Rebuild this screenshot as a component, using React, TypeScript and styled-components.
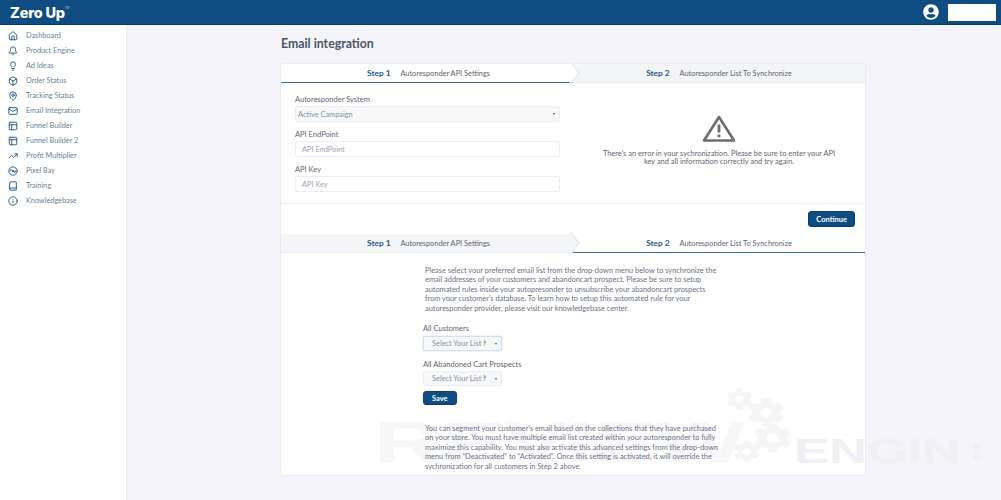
import styled, { createGlobalStyle } from 'styled-components';
import {
  Bell,
  Book,
  Box,
  Disc3,
  House,
  Info,
  Lightbulb,
  Mail,
  MapPin,
  PanelsTopLeft,
  TrendingUp,
} from 'lucide-react';
import { FaCog, FaUserCircle } from 'react-icons/fa';

const GlobalStyle = createGlobalStyle`
  html, body {
    margin: 0;
    height: 100%;
    overflow: hidden;
    background: #f4f4fa;
    font-family: "Lato", "Liberation Sans", sans-serif;
  }
  * {
    box-sizing: border-box;
  }
`;

const Page = styled.div`
  height: 500px;
  display: flex;
  flex-direction: column;
`;

const TopBar = styled.header`
  height: 25px;
  flex-shrink: 0;
  background: #0f4c81;
  border-bottom: 1px solid #0b3d6b;
  display: flex;
  align-items: center;
  justify-content: space-between;
  padding: 0 5px 0 10px;
`;

const Logo = styled.div`
  color: #fff;
  font-family: "Inter", "Liberation Sans", sans-serif;
  font-weight: 800;
  font-size: 14.5px;
  letter-spacing: -0.2px;
  display: flex;
  align-items: flex-start;

  sup {
    font-size: 3px;
    font-weight: 400;
    line-height: 8px;
    color: #b9c9d9;
  }
`;

const UserArea = styled.div`
  display: flex;
  align-items: center;
  gap: 9px;
`;

const UserName = styled.div`
  width: 48px;
  height: 17px;
  background: #fff;
`;

const Body = styled.div`
  flex: 1;
  display: flex;
  min-height: 0;
`;

const Sidebar = styled.nav`
  width: 127px;
  flex-shrink: 0;
  background: #fff;
  border-right: 1px solid #eceaf2;
  padding-top: 3px;
`;

const NavItem = styled.div`
  height: 15px;
  display: flex;
  align-items: center;
  gap: 8px;
  padding-left: 8px;
  font-size: 7.3px;
  color: #6c7f94;

  svg {
    width: 10px;
    height: 10px;
    color: #1d5587;
    stroke-width: 2.2;
    flex-shrink: 0;
  }
`;

const Main = styled.main`
  flex: 1;
  padding: 0 136px 0 154px;
`;

const Title = styled.h1`
  margin: 0;
  height: 39px;
  padding-top: 12px;
  font-size: 12.3px;
  line-height: 14px;
  font-weight: 700;
  color: #4b5563;
`;

const Card = styled.section`
  position: relative;
  background: #fff;
  border-radius: 2px;
  box-shadow: 0 0 2px rgba(60, 60, 90, 0.18);
  height: 411px;
`;

const Tabs = styled.div`
  display: grid;
  grid-template-columns: 292px 1fr;
  height: 19px;
`;

const Tab = styled.div<{ $active: boolean; $second?: boolean }>`
  position: relative;
  display: flex;
  align-items: center;
  justify-content: center;
  gap: 10px;
  background: ${(p) => (p.$active ? '#fff' : '#f4f5f7')};
  border-bottom: ${(p) => (p.$active ? '1.5px solid #2f6da3' : '1px solid #e9ebef')};
  padding-left: ${(p) => (p.$second ? '0' : '3px')};

  ${(p) => !p.$second && `
    &::after {
      content: '';
      position: absolute;
      z-index: 1;
      right: -5px;
      top: 2px;
      width: 13px;
      height: 13px;
      background: ${p.$active ? '#fff' : '#f4f5f7'};
      border-top: 1px solid #dfe2e8;
      border-right: 1px solid #dfe2e8;
      transform: rotate(45deg) skew(8deg, 8deg);
    }
  `}
`;

const StepNo = styled.span`
  color: #1f5687;
  font-size: 8.3px;
  font-weight: 700;
`;

const StepName = styled.span`
  color: #5d6470;
  font-size: 7.4px;
`;

const StepOne = styled.div`
  height: 121px;
  display: grid;
  grid-template-columns: 292px 1fr;
  border-bottom: 1px solid #eceef2;
`;

const FormColumn = styled.div`
  padding: 12px 13px 0 14px;
  display: flex;
  flex-direction: column;
`;

const Label = styled.label`
  font-size: 7.5px;
  line-height: 9px;
  color: #5d6470;
  margin-bottom: 2px;
`;

const SelectBox = styled.div<{ $focus?: boolean }>`
  position: relative;
  height: 16px;
  display: flex;
  align-items: center;
  background: #f8f8f9;
  border: 1px solid ${(p) => (p.$focus ? '#cfdff0' : '#ecedf0')};
  box-shadow: ${(p) => (p.$focus ? '0 0 2px #bcd6ee' : 'none')};
  border-radius: 2px;
  font-size: 7.4px;
  color: #7d93ad;
  padding-left: 2px;
  white-space: nowrap;

  &::after {
    content: '';
    position: absolute;
    right: 4px;
    top: 6px;
    border: 1.8px solid transparent;
    border-top: 2.5px solid #2a5680;
    border-bottom: 0;
  }
`;

const TextBox = styled.div`
  height: 16px;
  display: flex;
  align-items: center;
  background: #fff;
  border: 1px solid #eceef1;
  border-radius: 2px;
  font-size: 7.4px;
  color: #9aa3ae;
  padding-left: 6px;
`;

const FieldGroup = styled.div`
  margin-top: 8px;
  display: flex;
  flex-direction: column;
`;

const ErrorColumn = styled.div`
  display: flex;
  flex-direction: column;
  align-items: center;
  padding-top: 32px;
`;

const ErrorText = styled.p`
  margin: 8px 0 0;
  text-align: center;
  font-size: 7.45px;
  line-height: 7.5px;
  color: #5f6672;
`;

const Footer = styled.div`
  height: 30px;
  display: flex;
  align-items: flex-start;
  justify-content: flex-end;
  padding: 7px 10px 0 0;
`;

const Button = styled.button`
  height: 16px;
  padding: 0 7px;
  background: #0f4c81;
  color: #fff;
  border: 1px solid #0b3d6b;
  border-radius: 3px;
  font-family: inherit;
  font-size: 7.5px;
  font-weight: 700;
`;

const StepTwo = styled.div`
  width: 304px;
  margin-left: 142px;
  padding-top: 13px;
  position: relative;
  z-index: 1;
`;

const Copy = styled.p`
  margin: 0 0 0 2px;
  font-size: 7.4px;
  line-height: 9.4px;
  color: #6b7280;
  white-space: nowrap;
`;

const IntroCopy = styled(Copy)`
  margin-bottom: 11px;
`;

const ListField = styled.div`
  width: 79px;
  display: flex;
  flex-direction: column;
  margin-top: 9px;
`;

const ListFieldLabel = styled(Label)<{ $tight?: boolean }>`
  white-space: nowrap;
  margin-bottom: ${(p) => (p.$tight ? '2px' : '3px')};
`;

const ListSelect = styled(SelectBox)`
  padding-left: 8px;
  height: 15px;
`;

const ListSelectText = styled.span`
  width: 54px;
  overflow: hidden;
`;

const SaveButton = styled(Button)`
  display: block;
  height: 14px;
  padding: 0 8px;
  margin-top: 5px;
`;

const SecondCopy = styled(Copy)`
  margin-top: 19px;
`;

const Watermark = styled.div`
  position: absolute;
  left: 93px;
  top: 356px;
  width: 610px;
  height: 43px;
  color: #f7f6f8;
  font-family: "Liberation Sans", sans-serif;
  font-weight: 700;
  display: flex;
  align-items: flex-end;
  pointer-events: none;
`;

const BrandBig = styled.span`
  width: 230px;
  margin-right: 190px;
  font-size: 58px;
  line-height: 42px;
  transform: scaleX(1.62);
  transform-origin: left bottom;
`;

const BrandEnd = styled.span`
  width: 112px;
  margin-right: 66px;
  font-size: 35px;
  line-height: 25px;
  color: #f1eff3;
  transform: scaleX(1.5);
  transform-origin: left bottom;
`;

const BrandTld = styled.span`
  font-size: 9px;
  font-weight: 400;
  line-height: 8px;
  color: #eceaf0;
  writing-mode: vertical-rl;
  transform: rotate(180deg);
`;

const Gear = styled(FaCog)<{ $x: number; $y: number; $w: number; $h: number }>`
  position: absolute;
  left: ${(p) => p.$x}px;
  top: ${(p) => p.$y}px;
  width: ${(p) => p.$w}px;
  height: ${(p) => p.$h}px;
  color: #f5f4f6;
`;

const navItems = [
  { label: 'Dashboard', icon: House },
  { label: 'Product Engine', icon: Bell },
  { label: 'Ad Ideas', icon: Lightbulb },
  { label: 'Order Status', icon: Box },
  { label: 'Tracking Status', icon: MapPin },
  { label: 'Email Integration', icon: Mail },
  { label: 'Funnel Builder', icon: PanelsTopLeft },
  { label: 'Funnel Builder 2', icon: PanelsTopLeft },
  { label: 'Profit Multiplier', icon: TrendingUp },
  { label: 'Pixel Bay', icon: Disc3 },
  { label: 'Training', icon: Book },
  { label: 'Knowledgebase', icon: Info },
];

function StepTabs({ active }: { active: 1 | 2 }) {
  return (
    <Tabs>
      <Tab $active={active === 1}>
        <StepNo>Step 1</StepNo>
        <StepName>Autoresponder API Settings</StepName>
      </Tab>
      <Tab $active={active === 2} $second>
        <StepNo>Step 2</StepNo>
        <StepName>Autoresponder List To Synchronize</StepName>
      </Tab>
    </Tabs>
  );
}

function WarningIcon() {
  return (
    <svg width="34" height="27" viewBox="0 0 34 27">
      <path d="M17 2 L32 25.5 H2 Z" fill="none" stroke="#6d6d6d" strokeWidth="2.6" strokeLinejoin="round" />
      <rect x="15.6" y="9.5" width="2.8" height="8" fill="#6d6d6d" />
      <rect x="15.6" y="19.5" width="2.8" height="2.8" fill="#6d6d6d" />
    </svg>
  );
}

export default function App() {
  return (
    <Page>
      <GlobalStyle />
      <TopBar>
        <Logo>
          Zero Up<sup>TM</sup>
        </Logo>
        <UserArea>
          <FaUserCircle size={16} color="#fff" />
          <UserName />
        </UserArea>
      </TopBar>
      <Body>
        <Sidebar>
          {navItems.map(({ label, icon: Icon }) => (
            <NavItem key={label}>
              <Icon />
              {label}
            </NavItem>
          ))}
        </Sidebar>
        <Main>
          <Title>Email integration</Title>
          <Card>
            <StepTabs active={1} />
            <StepOne>
              <FormColumn>
                <Label>Autoresponder System</Label>
                <SelectBox>Active Campaign</SelectBox>
                <FieldGroup>
                  <Label>API EndPoint</Label>
                  <TextBox>API EndPoint</TextBox>
                </FieldGroup>
                <FieldGroup>
                  <Label>API Key</Label>
                  <TextBox>API Key</TextBox>
                </FieldGroup>
              </FormColumn>
              <ErrorColumn>
                <WarningIcon />
                <ErrorText>
                  There's an error in your sychronization. Please be sure to enter your API
                  <br />
                  key and all information correctly and try again.
                </ErrorText>
              </ErrorColumn>
            </StepOne>
            <Footer>
              <Button>Continue</Button>
            </Footer>
            <StepTabs active={2} />
            <Watermark>
              <BrandBig>REVIEW</BrandBig>
              <BrandEnd>ENGIN</BrandEnd>
              <BrandTld>.com</BrandTld>
              <Gear $x={352} $y={-32} $w={27} $h={22} preserveAspectRatio="none" />
              <Gear $x={373} $y={-22} $w={38} $h={29} preserveAspectRatio="none" />
              <Gear $x={379} $y={3} $w={39} $h={30} preserveAspectRatio="none" />
              <Gear $x={359} $y={21} $w={28} $h={21} preserveAspectRatio="none" />
            </Watermark>
            <StepTwo>
              <IntroCopy>
                Please select your preferred email list from the drop-down menu below to synchronize the
                <br />
                email addresses of your customers and abandoncart prospect. Please be sure to setup
                <br />
                automated rules inside your autopresonder to unsubscribe your abandoncart prospects
                <br />
                from your customer's database. To learn how to setup this automated rule for your
                <br />
                autoresponder provider, please visit our knowledgebase center.
              </IntroCopy>
              <ListField>
                <ListFieldLabel>All Customers</ListFieldLabel>
                <ListSelect $focus>
                  <ListSelectText>Select Your List N</ListSelectText>
                </ListSelect>
              </ListField>
              <ListField>
                <ListFieldLabel $tight>All Abandoned Cart Prospects</ListFieldLabel>
                <ListSelect>
                  <ListSelectText>Select Your List N</ListSelectText>
                </ListSelect>
              </ListField>
              <SaveButton>Save</SaveButton>
              <SecondCopy>
                You can segment your customer's email based on the collections that they have purchased
                <br />
                on your store. You must have multiple email list created within your autoresponder to fully
                <br />
                maximize this capability. You must also activate this advanced settings from the drop-down
                <br />
                menu from “Deactivated” to “Activated”. Once this setting is activated, it will override the
                <br />
                sychronization for all customers in Step 2 above.
              </SecondCopy>
            </StepTwo>
          </Card>
        </Main>
      </Body>
    </Page>
  );
}
